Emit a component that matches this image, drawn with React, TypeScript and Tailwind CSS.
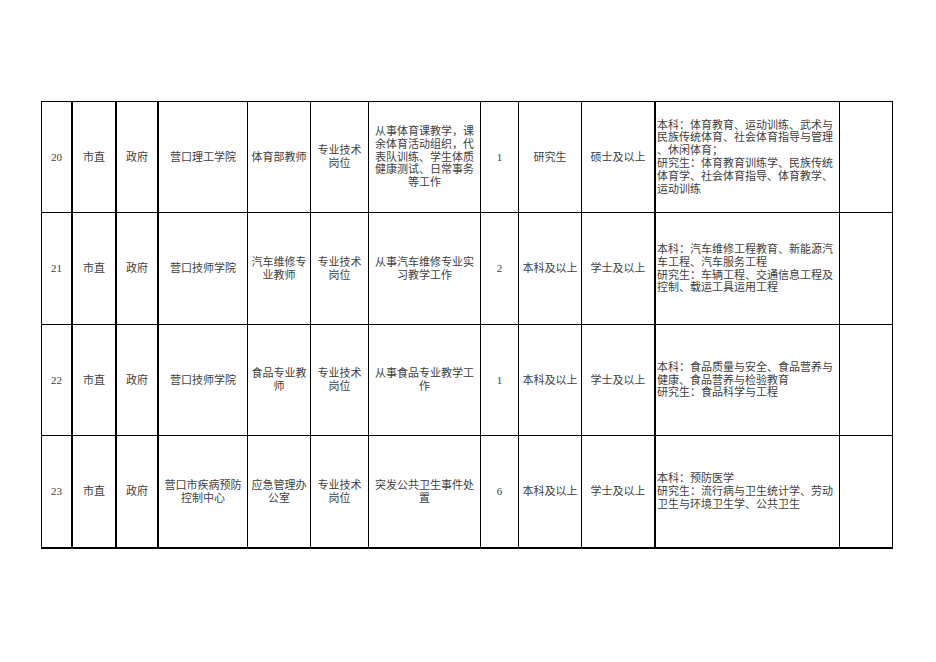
import React from "react";

type Row = {
  h: string;
  cells: React.ReactNode[];
};

const widths = [
  "w-[31px] border-r-2",
  "w-[44px] border-r-2",
  "w-[42px] border-r-2",
  "w-[89px] border-r",
  "w-[63px] border-r",
  "w-[58px] border-r",
  "w-[112px] border-r",
  "w-[38px] border-r",
  "w-[63px] border-r",
  "w-[74px] border-r-2",
  "w-[184px] border-r",
  "w-[53px] border-r",
];

const L = (lines: string[]) => (
  <>
    {lines.map((l, i) => (
      <div key={i}>{l}</div>
    ))}
  </>
);

const rows: Row[] = [
  {
    h: "h-[111px] border-b",
    cells: [
      "20",
      "市直",
      "政府",
      "营口理工学院",
      "体育部教师",
      L(["专业技术", "岗位"]),
      L(["从事体育课教学，课", "余体育活动组织，代", "表队训练、学生体质", "健康测试、日常事务", "等工作"]),
      "1",
      "研究生",
      "硕士及以上",
      L([
        "本科：体育教育、运动训练、武术与",
        "民族传统体育、社会体育指导与管理",
        "、休闲体育；",
        "研究生：体育教育训练学、民族传统",
        "体育学、社会体育指导、体育教学、",
        "运动训练",
      ]),
      "",
    ],
  },
  {
    h: "h-[112px] border-b",
    cells: [
      "21",
      "市直",
      "政府",
      "营口技师学院",
      L(["汽车维修专", "业教师"]),
      L(["专业技术", "岗位"]),
      L(["从事汽车维修专业实", "习教学工作"]),
      "2",
      "本科及以上",
      "学士及以上",
      L([
        "本科：汽车维修工程教育、新能源汽",
        "车工程、汽车服务工程",
        "研究生：车辆工程、交通信息工程及",
        "控制、载运工具运用工程",
      ]),
      "",
    ],
  },
  {
    h: "h-[111px] border-b",
    cells: [
      "22",
      "市直",
      "政府",
      "营口技师学院",
      L(["食品专业教", "师"]),
      L(["专业技术", "岗位"]),
      L(["从事食品专业教学工", "作"]),
      "1",
      "本科及以上",
      "学士及以上",
      L([
        "本科：食品质量与安全、食品营养与",
        "健康、食品营养与检验教育",
        "研究生：食品科学与工程",
      ]),
      "",
    ],
  },
  {
    h: "h-[113px] border-b-2",
    cells: [
      "23",
      "市直",
      "政府",
      L(["营口市疾病预防", "控制中心"]),
      L(["应急管理办", "公室"]),
      L(["专业技术", "岗位"]),
      L(["突发公共卫生事件处", "置"]),
      "6",
      "本科及以上",
      "学士及以上",
      L([
        "本科：预防医学",
        "研究生：流行病与卫生统计学、劳动",
        "卫生与环境卫生学、公共卫生",
      ]),
      "",
    ],
  },
];

export default function App() {
  return (
    <div
      className="w-[936px] h-[662px] bg-white pt-[101px] pl-[41px] text-[11px] leading-[12.8px] text-[#404040]"
      style={{ fontFamily: '"Liberation Serif", "Noto Sans CJK SC", serif' }}
    >
      <div className="inline-flex flex-col border-l border-t border-black">
        {rows.map((r, ri) => (
          <div key={ri} className={`flex border-black ${r.h}`}>
            {r.cells.map((c, ci) => (
              <div
                key={ci}
                className={`shrink-0 h-full border-black flex flex-col justify-center ${widths[ci]} ${
                  ci === 10 ? "items-start text-left pl-[1px]" : "items-center text-center"
                }`}
              >
                {c}
              </div>
            ))}
          </div>
        ))}
      </div>
    </div>
  );
}
